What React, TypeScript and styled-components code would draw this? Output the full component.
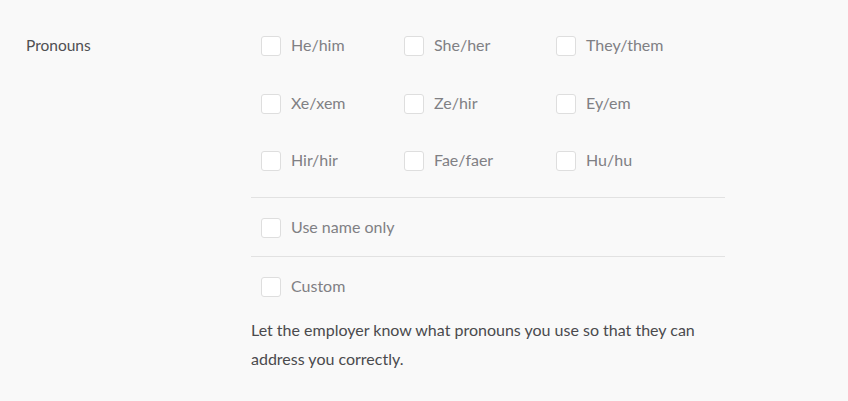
import React from "react";
import styled, { createGlobalStyle } from "styled-components";

const Global = createGlobalStyle`
  html, body { margin: 0; padding: 0; background: #f9f9f9; }
  body { font-family: Lato, "Noto Sans", sans-serif; }
`;

const Page = styled.div`
  display: flex;
  padding: 36px 0 0 26px;
  width: 848px;
  height: 401px;
  box-sizing: border-box;
`;

const FieldLabel = styled.div`
  width: 225px;
  flex: none;
  font-size: 15.5px;
  line-height: 20px;
  margin-top: -1px;
  color: #4f4f52;
`;

const Content = styled.div`
  width: 474px;
  display: flex;
  flex-direction: column;
`;

const Grid = styled.div`
  display: grid;
  grid-template-columns: 143px 152px auto;
  row-gap: 37.5px;
  padding: 0 0 26px 10px;
`;

const Section = styled.div<{ $top: number; $bottom: number }>`
  border-top: 1px solid #e2e2e2;
  padding: ${(p) => p.$top}px 0 ${(p) => p.$bottom}px 10px;
`;

const Option = styled.label`
  display: flex;
  align-items: center;
  gap: 10px;
  height: 20px;
  font-size: 16px;
  color: #808084;
`;

const OptionText = styled.span`
  line-height: 20px;
  margin-top: -2px;
`;

const Box = styled.span`
  width: 18px;
  height: 18px;
  flex: none;
  background: #fff;
  border: 1px solid #dedede;
  border-radius: 3px;
`;

const Help = styled.p`
  margin: 18px 0 0;
  font-size: 16px;
  line-height: 29px;
  color: #4a4a4d;
`;

const pronouns = [
  "He/him", "She/her", "They/them",
  "Xe/xem", "Ze/hir", "Ey/em",
  "Hir/hir", "Fae/faer", "Hu/hu",
];

const Check = ({ text }: { text: string }) => (
  <Option>
    <Box />
    <OptionText>{text}</OptionText>
  </Option>
);

export default function App() {
  return (
    <>
      <Global />
      <Page>
        <FieldLabel>Pronouns</FieldLabel>
        <Content>
          <Grid>
            {pronouns.map((p) => (
              <Check key={p} text={p} />
            ))}
          </Grid>
          <Section $top={20} $bottom={18}>
            <Check text="Use name only" />
          </Section>
          <Section $top={20} $bottom={0}>
            <Check text="Custom" />
          </Section>
          <Help>
            Let the employer know what pronouns you use so that they can address you correctly.
          </Help>
        </Content>
      </Page>
    </>
  );
}
